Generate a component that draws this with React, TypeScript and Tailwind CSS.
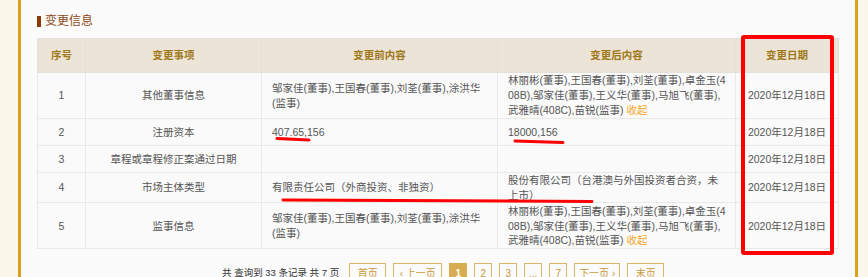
import React from 'react';

type Row = {
    no: number;
    item: string;
    before: React.ReactNode[];
    after: React.ReactNode[];
    date: string;
    h: string;
};

const collapse = <span className="text-[#f5a623]"> 收起</span>;

const rows: Row[] = [
    {
        no: 1,
        item: '其他董事信息',
        before: ['邹家佳(董事),王国春(董事),刘荃(董事),涂洪华', '(监事)'],
        after: [
            '林丽彬(董事),王国春(董事),刘荃(董事),卓金玉(4',
            '08B),邹家佳(董事),王义华(董事),马旭飞(董事),',
            <>武雅晴(408C),苗锐(监事){collapse}</>
        ],
        date: '2020年12月18日',
        h: 'h-[46px]'
    },
    { no: 2, item: '注册资本', before: ['407.65,156'], after: ['18000,156'], date: '2020年12月18日', h: 'h-[27px]' },
    { no: 3, item: '章程或章程修正案通过日期', before: [], after: [], date: '2020年12月18日', h: 'h-[27px]' },
    {
        no: 4,
        item: '市场主体类型',
        before: ['有限责任公司（外商投资、非独资）'],
        after: ['股份有限公司（台港澳与外国投资者合资，未', '上市）'],
        date: '2020年12月18日',
        h: 'h-[30px]'
    },
    {
        no: 5,
        item: '监事信息',
        before: ['邹家佳(董事),王国春(董事),刘荃(董事),涂洪华', '(监事)'],
        after: [
            '林丽彬(董事),王国春(董事),刘荃(董事),卓金玉(4',
            '08B),邹家佳(董事),王义华(董事),马旭飞(董事),',
            <>武雅晴(408C),苗锐(监事){collapse}</>
        ],
        date: '2020年12月18日',
        h: 'h-[46px]'
    }
];

const pages = [
    { label: '首页', w: 'w-[37px]' },
    { label: '‹ 上一页', w: 'w-[49px]' },
    { label: '1', w: 'w-[18px]', active: true },
    { label: '2', w: 'w-[18px]' },
    { label: '3', w: 'w-[18px]' },
    { label: '...', w: 'w-[18px]' },
    { label: '7', w: 'w-[18px]' },
    { label: '下一页 ›', w: 'w-[46px]' },
    { label: '末页', w: 'w-[37px]' }
];

function Lines({ lines }: { lines: React.ReactNode[] }) {
    return (
        <>
            {lines.map((l, i) => (
                <div key={i} className="whitespace-nowrap">{l}</div>
            ))}
        </>
    );
}

export default function App() {
    return (
        <div className="relative flex w-[868px] h-[277px] overflow-hidden bg-[#faf7ea] font-['Liberation_Sans','Noto_Sans_CJK_SC',sans-serif]">
            <div className="w-[18px] shrink-0" />
            <div className="w-[3px] shrink-0 bg-[#d9a21b]" />

            <main className="w-[834px] shrink-0 bg-[#fbfbfb] pl-[16px] pt-[14px]">
                {/* Title */}
                <div className="flex items-center h-[14px]">
                    <span className="w-[4px] h-[11px] bg-[#8b3a06]" />
                    <span className="ml-[4px] text-[12px] leading-[14px] text-[#8c4a16]">变更信息</span>
                </div>

                {/* Table */}
                <table className="mt-[10px] w-[801px] table-fixed border-collapse text-[10.5px] leading-[14.7px] text-[#555]">
                    <colgroup>
                        <col className="w-[48px]" />
                        <col className="w-[176px]" />
                        <col className="w-[236px]" />
                        <col className="w-[238px]" />
                        <col className="w-[103px]" />
                    </colgroup>
                    <thead>
                        <tr className="h-[34px] bg-[#ece4d7] text-[#a07818] font-bold">
                            <th className="border border-[#e6e1d8]">序号</th>
                            <th className="border border-[#e6e1d8]">变更事项</th>
                            <th className="border border-[#e6e1d8]">变更前内容</th>
                            <th className="border border-[#e6e1d8]">变更后内容</th>
                            <th className="border border-[#e6e1d8]">变更日期</th>
                        </tr>
                    </thead>
                    <tbody>
                        {rows.map((r) => (
                            <tr key={r.no} className={`${r.h} bg-[#fafafa]`}>
                                <td className="border border-[#e9e9e9] text-center">{r.no}</td>
                                <td className="border border-[#e9e9e9] text-center">{r.item}</td>
                                <td className="border border-[#e9e9e9] px-[10px] align-middle">
                                    <Lines lines={r.before} />
                                </td>
                                <td className="border border-[#e9e9e9] px-[10px] align-middle">
                                    <Lines lines={r.after} />
                                </td>
                                <td className="border border-[#e9e9e9] text-center">{r.date}</td>
                            </tr>
                        ))}
                    </tbody>
                </table>

                {/* Pagination */}
                <div className="mt-[14px] pl-[185px] flex items-center">
                    <span className="text-[9.5px] text-[#333] whitespace-nowrap mr-[10px]">共 查询到 33 条记录 共 7 页</span>
                    <div className="flex gap-[7px]">
                        {pages.map((p) => (
                            <span
                                key={p.label}
                                className={`${p.w} h-[20px] flex items-center justify-center border text-[10px] whitespace-nowrap ${
                                    p.active
                                        ? 'bg-[#d8ad52] border-[#d8ad52] text-white font-bold'
                                        : 'border-[#dcb66c] text-[#c99a3c]'
                                }`}
                            >
                                {p.label}
                            </span>
                        ))}
                    </div>
                </div>
            </main>

            <div className="w-[3px] shrink-0 bg-[#d9a21b]" />
            <div className="flex-1" />

            {/* Annotations */}
            <div className="absolute left-[741px] top-[35px] w-[93px] h-[220px] border-[4px] border-[#ff0000] rounded-[3px] pointer-events-none" />
            <svg className="absolute inset-0 pointer-events-none" width="868" height="277">
                <g stroke="#ff0000" strokeWidth="3" strokeLinecap="round" fill="none">
                    <line x1="277" y1="138.5" x2="309" y2="140" />
                    <line x1="515" y1="141" x2="563" y2="142.5" />
                    <line x1="283" y1="200" x2="592" y2="201.5" />
                </g>
            </svg>
        </div>
    );
}
